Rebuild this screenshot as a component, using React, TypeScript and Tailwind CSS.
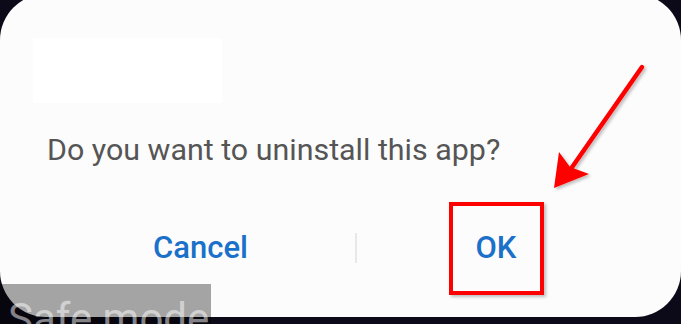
import React from 'react';

const Arrow = () => (
  <svg className="absolute left-[540px] top-[55px]" width="120" height="150" viewBox="0 0 120 150">
    <defs>
      <filter id="sh" x="-20%" y="-20%" width="140%" height="140%">
        <feDropShadow dx="2" dy="2" stdDeviation="1.5" floodColor="#000" floodOpacity="0.25" />
      </filter>
    </defs>
    <g filter="url(#sh)" fill="#ff0000" stroke="#ff0000">
      <line x1="102" y1="12" x2="28" y2="118" strokeWidth="4.5" strokeLinecap="round" />
      <path d="M14 133 L19 97 L30 112 L49 119 Z" stroke="none" />
    </g>
  </svg>
);

export default function App() {
  return (
    <div className="relative h-[324px] w-[681px] overflow-hidden bg-[#0c0a18] font-['Roboto',sans-serif]">
      <div className="-mt-[6px] flex h-[323px] flex-col rounded-[46px] bg-[#fcfcfc]">
        <div className="ml-[33px] mt-[44px] h-[65px] w-[189px] bg-white" />
        <p className="ml-[47px] mt-[29px] text-[30.4px] leading-[36px] text-[#555555]">
          Do you want to uninstall this app?
        </p>
        <div className="mt-[62px] flex items-center">
          <div className="flex w-[355px] justify-center pl-[46px]">
            <span className="text-[31px] font-medium leading-[36px] text-[#1b70c9]">Cancel</span>
          </div>
          <div className="h-[30px] w-[2px] bg-[#e8e8e8]" />
          <div className="flex flex-1 justify-center pr-[46px]">
            <span className="text-[31px] font-medium leading-[36px] text-[#1b70c9]">OK</span>
          </div>
        </div>
      </div>

      <div className="absolute left-[449px] top-[202px] h-[93px] w-[95px] border-[4px] border-[#ff0000] shadow-[2px_2px_3px_rgba(0,0,0,0.25)]" />
      <Arrow />

      <div className="absolute left-0 top-[284px] h-[40px] w-[211px] overflow-hidden bg-black/35">
        <span className="block whitespace-nowrap pl-[8px] pt-[12px] text-[42px] leading-[46px] text-white/50">Safe mode</span>
      </div>
    </div>
  );
}
